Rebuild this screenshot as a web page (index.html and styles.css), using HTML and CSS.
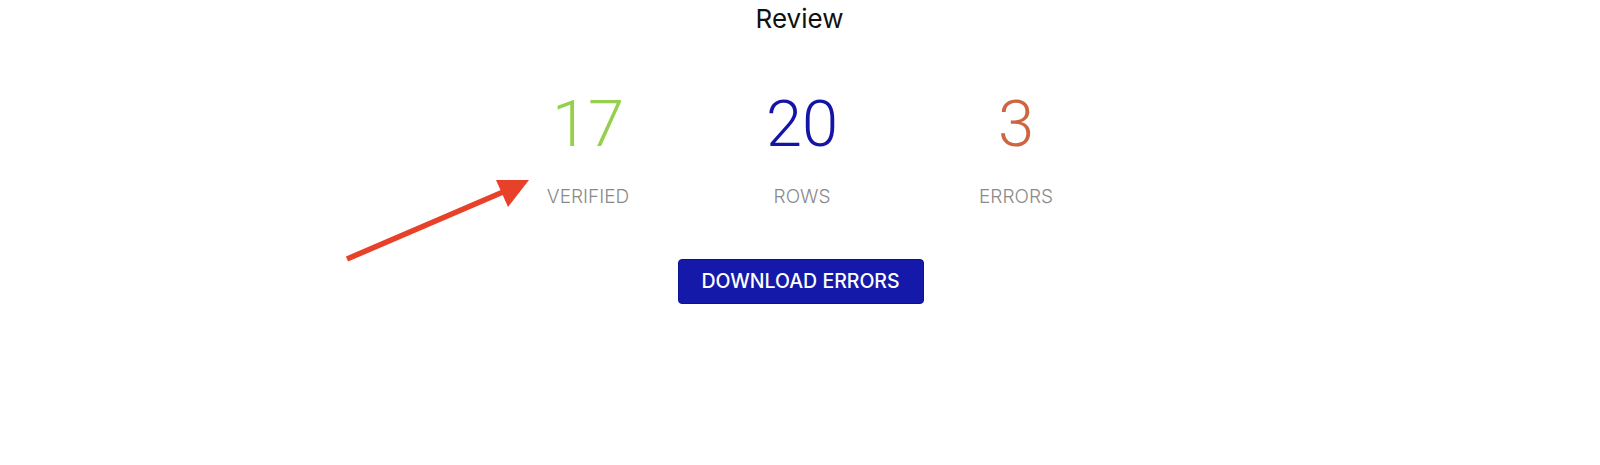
FILE: index.html
```html
<!DOCTYPE html>
<html lang="en">
<head>
<meta charset="utf-8">
<title>Review</title>
<link rel="stylesheet" href="styles.css">
</head>
<body>
<main class="review">
  <h1 class="title">Review</h1>
  <section class="stats">
    <div class="stat">
      <div class="num num-green">17</div>
      <div class="label">VERIFIED</div>
    </div>
    <div class="stat">
      <div class="num num-blue">20</div>
      <div class="label">ROWS</div>
    </div>
    <div class="stat">
      <div class="num num-orange">3</div>
      <div class="label">ERRORS</div>
    </div>
  </section>
  <div class="actions">
    <button class="btn">DOWNLOAD ERRORS</button>
  </div>
  <svg class="arrow" width="200" height="100" viewBox="340 170 200 100" aria-hidden="true">
    <line x1="347" y1="259" x2="503" y2="192" stroke="#e8412a" stroke-width="5.5"/>
    <polygon points="496,180 529,180 508,207" fill="#e8412a"/>
  </svg>
</main>
</body>
</html>
```
FILE: styles.css
```css
html, body {
  margin: 0;
  padding: 0;
  background: #ffffff;
}
body {
  font-family: Inter, "Noto Sans", sans-serif;
  color: #111111;
}
.review {
  position: relative;
  width: 1600px;
  height: 465px;
}
.title {
  margin: 0;
  padding-top: 6px;
  font-size: 26px;
  font-weight: 400;
  line-height: 26px;
  text-align: center;
  color: #111111;
  padding-right: 1px;
}
.stats {
  display: grid;
  grid-template-columns: repeat(3, 214px);
  justify-content: center;
  margin-top: 60px;
  padding-left: 4px;
}
.stat {
  display: flex;
  flex-direction: column;
  align-items: center;
}
.num {
  font-family: Roboto, "Liberation Sans", sans-serif;
  font-weight: 300;
  font-size: 65px;
  line-height: 65px;
}
.num-green { color: #95d04c; }
.num-blue { color: #1414a6; }
.num-orange { color: #cf6440; }
.label {
  margin-top: 30px;
  font-size: 19px;
  line-height: 19px;
  font-weight: 300;
  color: #8a8a8a;
}
.actions {
  display: flex;
  justify-content: center;
  margin-top: 53px;
  padding-left: 1px;
}
.btn {
  box-sizing: border-box;
  width: 246px;
  height: 45px;
  padding: 0;
  border: 1px solid #0d1390;
  border-radius: 4px;
  background: #1419a9;
  color: #ffffff;
  font-family: Inter, "Noto Sans", sans-serif;
  font-size: 19.5px;
  font-weight: 500;
  line-height: 1;
}
.arrow {
  position: absolute;
  left: 340px;
  top: 170px;
}
```
